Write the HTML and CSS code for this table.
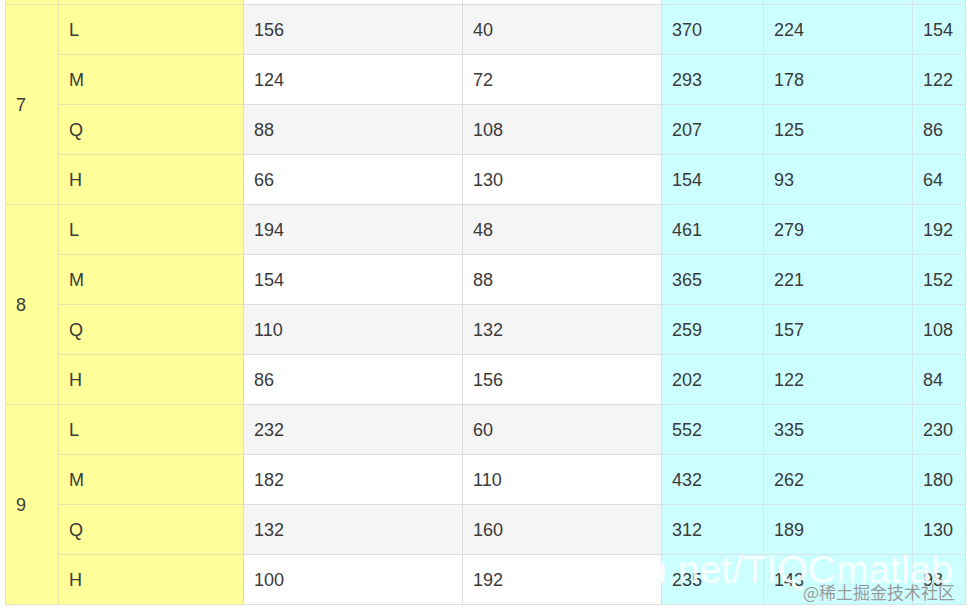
FILE: index.html
```html
<!DOCTYPE html>
<html>
<head>
<meta charset="utf-8">
<link rel="stylesheet" href="styles.css">
</head>
<body>
<div class="viewport">
<table class="qr">
<colgroup>
<col class="c1"><col class="c2"><col class="c3"><col class="c4"><col class="c5"><col class="c6"><col class="c7">
</colgroup>
<tbody>
<tr class="even"><td class="ver"></td><td class="ec"></td><td></td><td></td><td class="cap"></td><td class="cap"></td><td class="cap"></td></tr>

<tr class="odd"><td class="ver" rowspan="4">7</td><td class="ec">L</td><td>156</td><td>40</td><td class="cap">370</td><td class="cap">224</td><td class="cap">154</td></tr>
<tr class="even"><td class="ec">M</td><td>124</td><td>72</td><td class="cap">293</td><td class="cap">178</td><td class="cap">122</td></tr>
<tr class="odd"><td class="ec">Q</td><td>88</td><td>108</td><td class="cap">207</td><td class="cap">125</td><td class="cap">86</td></tr>
<tr class="even"><td class="ec">H</td><td>66</td><td>130</td><td class="cap">154</td><td class="cap">93</td><td class="cap">64</td></tr>

<tr class="odd"><td class="ver" rowspan="4">8</td><td class="ec">L</td><td>194</td><td>48</td><td class="cap">461</td><td class="cap">279</td><td class="cap">192</td></tr>
<tr class="even"><td class="ec">M</td><td>154</td><td>88</td><td class="cap">365</td><td class="cap">221</td><td class="cap">152</td></tr>
<tr class="odd"><td class="ec">Q</td><td>110</td><td>132</td><td class="cap">259</td><td class="cap">157</td><td class="cap">108</td></tr>
<tr class="even"><td class="ec">H</td><td>86</td><td>156</td><td class="cap">202</td><td class="cap">122</td><td class="cap">84</td></tr>

<tr class="odd"><td class="ver" rowspan="4">9</td><td class="ec">L</td><td>232</td><td>60</td><td class="cap">552</td><td class="cap">335</td><td class="cap">230</td></tr>
<tr class="even"><td class="ec">M</td><td>182</td><td>110</td><td class="cap">432</td><td class="cap">262</td><td class="cap">180</td></tr>
<tr class="odd"><td class="ec">Q</td><td>132</td><td>160</td><td class="cap">312</td><td class="cap">189</td><td class="cap">130</td></tr>
<tr class="even"><td class="ec">H</td><td>100</td><td>192</td><td class="cap">235</td><td class="cap">143</td><td class="cap">98</td></tr>
</tbody>
</table>
<div class="wm-url">blog.csdn.net/TIQCmatlab</div>
<div class="wm-site">@稀土掘金技术社区</div>
</div>
</body>
</html>
```

FILE: styles.css
```css
html, body {
  margin: 0;
  padding: 0;
  background: #ffffff;
}

.viewport {
  position: relative;
  width: 968px;
  height: 611px;
  overflow: hidden;
  padding-left: 5px;
  box-sizing: border-box;
}

.qr {
  border-collapse: collapse;
  table-layout: fixed;
  width: 961px;
  margin-top: -46px;
  font-family: "Liberation Sans", Arial, sans-serif;
  font-size: 18px;
  color: #3a3a3a;
}

.c1 { width: 53px; }
.c2 { width: 185px; }
.c3 { width: 219px; }
.c4 { width: 199px; }
.c5 { width: 102px; }
.c6 { width: 149px; }
.c7 { width: 53px; }

.qr td {
  border: 1px solid #dddddd;
  height: 49px;
  padding: 0 10px;
  line-height: 20px;
  vertical-align: middle;
  white-space: nowrap;
  overflow: hidden;
}

.qr tr.odd td { background: #f5f5f5; }
.qr tr.even td { background: #ffffff; }

.qr td.ver,
.qr td.ec { background: #ffff99 !important; border-color: #e6e6a8; }

.qr td.cap { background: #ccffff !important; border-color: #d4e6e6; }

.wm-url {
  position: absolute;
  right: 15px;
  top: 546px;
  font-family: "Liberation Sans", Arial, sans-serif;
  font-size: 39px;
  line-height: 48px;
  color: rgba(255, 255, 255, 0.85);
  white-space: nowrap;
}

.wm-site {
  position: absolute;
  right: 13px;
  top: 581px;
  font-family: "Noto Sans CJK SC", sans-serif;
  font-size: 17px;
  line-height: 22px;
  color: #9a9a9a;
  white-space: nowrap;
}
```
